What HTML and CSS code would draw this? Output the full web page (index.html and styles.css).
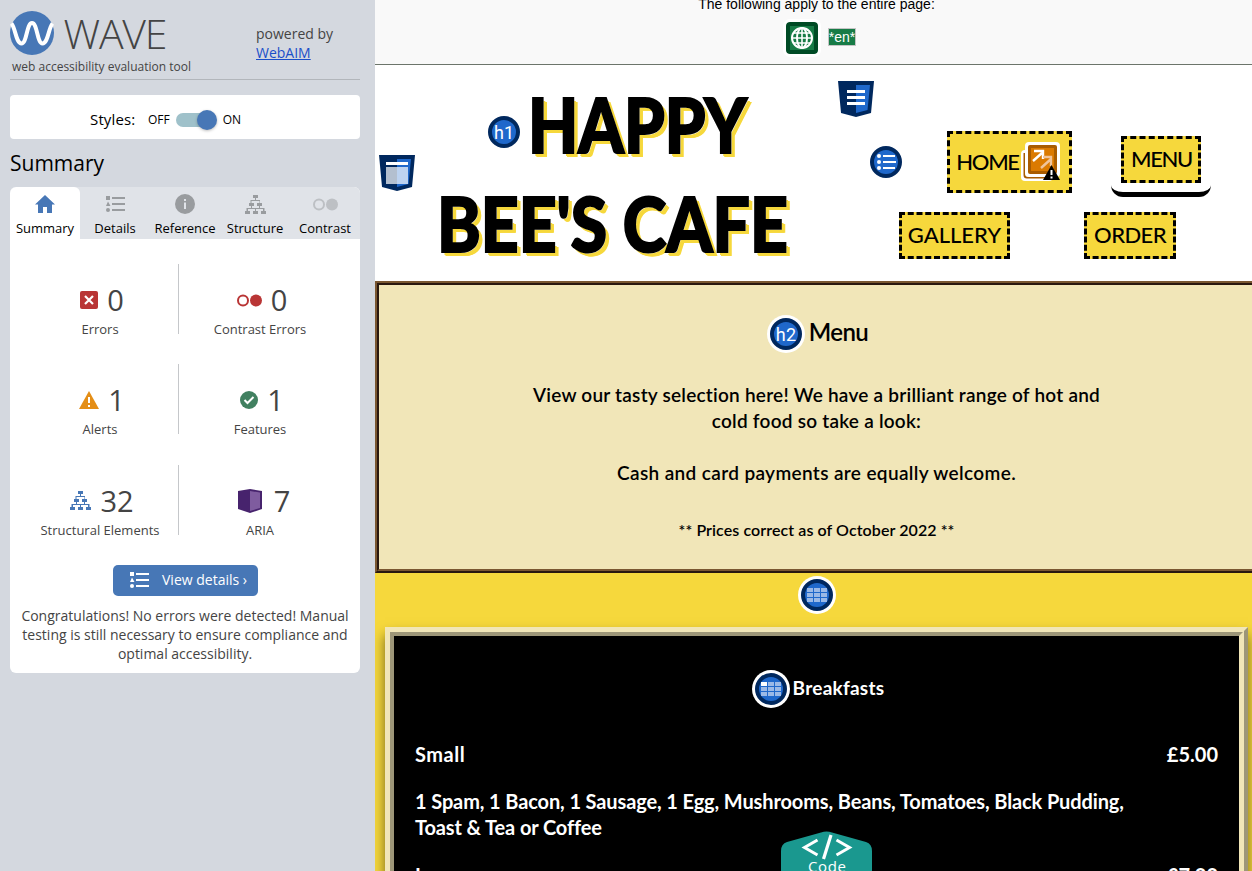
FILE: index.html
```html
<!DOCTYPE html>
<html lang="en">
<head>
<meta charset="utf-8">
<title>WAVE Report of Happy Bee's Cafe</title>
<link rel="stylesheet" href="styles.css">
</head>
<body>
<svg class="defs" width="0" height="0">
  <symbol id="tree" viewBox="0 0 21 19"><path d="M8 0h5v3h-2v2h4v3h2v3h-2v2h4.500v3H21v3h-5v-3h2v-2h-7v2h2v3H8v-3h2v-2H3v2h2v3H0v-3h1.500v-3H6v-2H4V8h1.500V5H10V3H8zM6.500 6v2H9v3H7v2h7v-2h-2V8h2.500V6z"/></symbol>
  <symbol id="list" viewBox="0 0 19 17"><path d="M0 0h4v4H0zM6 1h13v2H6zM2 5.500L4.500 10H0zM6 7h13v2H6zM6 13h13v2H6z"/><circle cx="2" cy="14" r="2"/></symbol>
  <symbol id="pair" viewBox="0 0 25 13"><circle cx="6" cy="6.500" r="5" fill="none" stroke="currentColor" stroke-width="2"/><circle cx="19" cy="6.500" r="6" fill="currentColor"/></symbol>
</svg>
<div class="app">
  <aside class="sidebar">
    <header class="brand">
      <div class="logo">
        <div class="logo-row">
          <svg width="44" height="44" viewBox="0 0 44 44"><circle cx="22" cy="22" r="22" fill="#4777b6"/><path d="M1.500 12.500C5.500 17 6 32.500 11.500 32.500 17 32.500 16.500 12 22 12s5 20.500 10.500 20.500C38 32.500 38.500 17 42.500 12.500" fill="none" stroke="#fff" stroke-width="4"/></svg>
          <svg width="106" height="44" viewBox="0 0 106 44"><text class="wordmark" x="-0.500" y="38" textLength="104">WAVE</text></svg>
        </div>
        <div class="tagline">web accessibility evaluation tool</div>
      </div>
      <div class="powered">powered by<br><a href="#">WebAIM</a></div>
    </header>
    <div class="styles-box"><span class="styles-label">Styles:</span><span>OFF</span><span class="switch"><i></i></span><span>ON</span></div>
    <h2 class="side-title">Summary</h2>
    <section class="panel">
      <nav class="tabs">
        <div class="tab active"><svg width="20" height="18" viewBox="0 0 20 18"><path d="M10 0l10 9.500h-3V18h-5v-6H8v6H3V9.500H0z" fill="#4777b6"/></svg>Summary</div>
        <div class="tab"><svg width="19" height="17"><use href="#list"/></svg>Details</div>
        <div class="tab"><svg width="20" height="20" viewBox="0 0 20 20"><circle cx="10" cy="10" r="10"/><path d="M9 5h2v2H9zM9 8.500h2V15H9z" fill="#e0e3e8"/></svg>Reference</div>
        <div class="tab"><svg width="21" height="19"><use href="#tree"/></svg>Structure</div>
        <div class="tab pale"><svg width="25" height="13"><use href="#pair"/></svg>Contrast</div>
      </nav>
      <div class="stats">
        <div class="stat"><div class="num"><svg width="18" height="18" viewBox="0 0 18 18"><rect width="18" height="18" rx="2" fill="#b93535"/><path d="M5 5l8 8M13 5l-8 8" stroke="#fff" stroke-width="2.200"/></svg>0</div>Errors</div>
        <div class="stat"><div class="num red"><svg width="25" height="13"><use href="#pair"/></svg>0</div>Contrast Errors</div>
        <div class="stat"><div class="num"><svg width="20" height="18" viewBox="0 0 20 18"><path d="M10 0l10 18H0z" fill="#e48e16"/><path d="M9 6h2v6H9zM9 14h2v2H9z" fill="#fff"/></svg>1</div>Alerts</div>
        <div class="stat"><div class="num"><svg width="18" height="18" viewBox="0 0 18 18"><circle cx="9" cy="9" r="9" fill="#418060"/><path d="M4.500 9l3 3 6-6" fill="none" stroke="#fff" stroke-width="2"/></svg>1</div>Features</div>
        <div class="stat"><div class="num blue"><svg width="21" height="19"><use href="#tree"/></svg>32</div>Structural Elements</div>
        <div class="stat"><div class="num aria"><svg width="24" height="24" viewBox="0 0 24 24"><path d="M0 2l12-2 12 2v18l-12 4-12-4z" fill="#47236d"/><path d="M12 2l10 1.500v15.500L12 22z" fill="#7f5c9f"/></svg>7</div>ARIA</div>
      </div>
      <button class="details-btn"><svg width="19" height="17"><use href="#list"/></svg>View details ›</button>
      <p class="congrats">Congratulations! No errors were detected! Manual testing is still necessary to ensure compliance and optimal accessibility.</p>
    </section>
  </aside>

  <main class="view">
    <div class="page">
      <div class="applies">
        <div class="applies-text">The following apply to the entire page:</div>
        <div class="applies-row">
          <svg class="halo-sq" width="32" height="32" viewBox="0 0 32 32"><rect width="32" height="32" rx="3" fill="#004b25"/><rect x="4" y="4" width="24" height="24" fill="#177b46"/><g fill="none" stroke="#fff" stroke-width="2"><circle cx="16" cy="16" r="10"/><ellipse cx="16" cy="16" rx="5" ry="10"/><path d="M16 6v20M6 16h20M7.500 11h17M7.500 21h17" stroke-width="1.600"/></g></svg>
          <span class="lang">*en*</span>
        </div>
      </div>
      <header class="cafe-head">
        <svg class="mark-head" width="36" height="36" viewBox="0 0 36 36"><path d="M0 0h36l-3 32-15 4-15-4z" fill="#00285e"/><path d="M18 4h14l-2.500 25L18 32z" fill="#1f68cb"/><path d="M7 7h22v3H7z" fill="#fff"/><path d="M7 12h22v17H7z" fill="#fff" opacity=".7"/></svg>
        <h1 class="cafe-title">
          <span class="title-line"><svg width="32" height="32" viewBox="0 0 32 32"><circle cx="16" cy="16" r="14" fill="#1f68cb" stroke="#00285e" stroke-width="4"/><text class="htag" x="16" y="22.700">h1</text></svg><span class="w happy">HAPPY</span></span>
          <span class="title-line second"><span class="w bees">BEE'S CAFE</span></span>
        </h1>
        <nav class="cafe-nav">
          <svg class="mark-nav" width="36" height="36" viewBox="0 0 36 36"><path d="M0 0h36l-3 32-15 4-15-4z" fill="#00285e"/><path d="M18 4h14l-2.500 25L18 32z" fill="#1f68cb"/><path d="M9 9h18v3H9zM9 15h18v3H9zM9 21h18v3H9z" fill="#fff"/></svg>
          <div class="nav-row one">
            <svg width="32" height="32" viewBox="0 0 32 32"><circle cx="16" cy="16" r="14" fill="#1f68cb" stroke="#00285e" stroke-width="4"/><g fill="#fff"><circle cx="9" cy="10" r="2"/><circle cx="9" cy="16" r="2"/><circle cx="9" cy="22" r="2"/><path d="M13 9h12v2H13zM13 15h13v2H13zM13 21h12v2H13z"/></g></svg>
            <a class="btn home"><span class="w tight">HOME</span><svg width="40" height="40" viewBox="0 0 40 40"><rect x="0" y="8" width="32" height="31" rx="4" fill="#fff"/><path d="M3.500 11v22q0 2.500 2.500 2.500h24" fill="none" stroke="#a95c00" stroke-width="2"/><rect x="4" y="0" width="35" height="35" rx="4" fill="#fff"/><rect x="7" y="3" width="29" height="29" rx="2" fill="#a95c00"/><rect x="10" y="6" width="23" height="23" fill="#db7a00"/><path d="M12 19l9-8M13 9h9v8" fill="none" stroke="#fff" stroke-width="2.400"/><path d="M20 26l10-9M22 15h8v9" fill="none" stroke="#f0c49a" stroke-width="2.400"/><path d="M30.500 23L39 38H22z" fill="#000"/><path d="M29.500 28h2v5h-2zM29.500 34.500h2v2h-2z" fill="#fff"/></svg></a>
            <div class="current"><a class="btn"><span class="w tight">MENU</span></a></div>
          </div>
          <div class="nav-row two"><a class="btn gallery"><span class="w">GALLERY</span></a><a class="btn order"><span class="w snug">ORDER</span></a></div>
        </nav>
      </header>
      <section class="intro"><div class="intro-in">
        <h2 class="intro-title"><svg width="38" height="38" viewBox="0 0 38 38"><circle cx="19" cy="19" r="19" fill="#fff"/><circle cx="19" cy="19" r="14" fill="#1f68cb" stroke="#00285e" stroke-width="4"/><text class="htag" x="19" y="25.700">h2</text></svg><span class="w snug">Menu</span></h2>
        <p>View our tasty selection here! We have a brilliant range of hot and<br>cold food so take a look:</p>
        <p class="wide">Cash and card payments are equally welcome.</p>
        <p class="small">** Prices correct as of October 2022 **</p>
      </div></section>
      <section class="menu">
        <svg class="table-mark" width="38" height="38" viewBox="0 0 38 38"><circle cx="19" cy="19" r="19" fill="#fff"/><circle cx="19" cy="19" r="14" fill="#1f68cb" stroke="#00285e" stroke-width="4"/><path d="M9 12h6v4H9zM16 12h6v4h-6zM23 12h6v4h-6zM9 17h6v4H9zM16 17h6v4h-6zM23 17h6v4h-6zM9 22h6v4H9zM16 22h6v4h-6zM23 22h6v4h-6z" fill="#9bb9e6"/></svg>
        <div class="board">
          <h3 class="board-title"><svg width="38" height="38" viewBox="0 0 38 38"><circle cx="19" cy="19" r="19" fill="#fff"/><circle cx="19" cy="19" r="14" fill="#1f68cb" stroke="#00285e" stroke-width="4"/><path d="M9 12h6v4H9z" fill="#fff"/><path d="M16 12h6v4h-6zM23 12h6v4h-6zM9 17h6v4H9zM16 17h6v4h-6zM23 17h6v4h-6zM9 22h6v4H9zM16 22h6v4h-6zM23 22h6v4h-6z" fill="#9bb9e6"/></svg><span>Breakfasts</span></h3>
          <div class="item"><span class="size">Small</span><span>£5.00</span></div>
          <div class="desc">1 Spam, 1 Bacon, 1 Sausage, 1 Egg, Mushrooms, Beans, Tomatoes, Black Pudding,<br>Toast &amp; Tea or Coffee</div>
          <div class="item"><span class="size">Large</span><span>£7.00</span></div>
        </div>
      </section>
    </div>
    <div class="code-tab"><svg width="91" height="60" viewBox="0 0 91 60"><path d="M0 20q0-7 6-9L40 1.500q5.500-2 11 0L85 11q6 2 6 9v40H0z" fill="#1a988f"/><path d="M36.500 9L23.500 16.500 36.500 24M55.500 9l13 7.500-13 7.500" fill="none" stroke="#fff" stroke-width="3"/><path d="M50 4L42.500 28" stroke="#fff" stroke-width="3.200"/><text class="code-text" x="27" y="41" textLength="38">Code</text></svg></div>
  </main>
</div>
</body>
</html>
```
FILE: styles.css
```css
* { box-sizing: border-box; }
body { margin: 0; font-family: "Open Sans", sans-serif; color: #000; overflow: hidden; }
.defs { position: absolute; }
svg { display: block; flex: none; }
h1, h2, h3, p { margin: 0; font-weight: inherit; }
.app { display: flex; width: 1252px; height: 871px; overflow: hidden; }

.sidebar { width: 375px; flex: none; padding: 0 15px 0 10px; background: #d4d8df; }
.brand { display: flex; height: 80px; border-bottom: 1px solid #b2b6bb; color: #444; }
.logo { width: 246px; padding-top: 11px; }
.logo-row { display: flex; gap: 10px; }
.wordmark { font-size: 41px; font-weight: 300; fill: #444; }
.tagline { margin: 3px 0 0 2px; font-size: 12px; line-height: 17px; white-space: nowrap; }
.powered { padding-top: 24px; font-size: 14px; line-height: 19px; }
.powered a { color: #1a4fc9; }
.styles-box { display: flex; align-items: center; height: 44px; margin-top: 15px; padding: 5px 0 0 80px; border-radius: 4px; background: #fff; font-size: 12px; }
.styles-label { width: 58px; margin-top: -2px; font-size: 15px; letter-spacing: .15px; }
.switch { width: 38px; height: 14px; margin: 0 9px 0 6px; border-radius: 7px; background: #9fc1ca; }
.switch i { display: block; width: 20px; height: 20px; margin: -3px 0 0 21px; border-radius: 50%; background: #4777b6; box-shadow: 0 1px 3px #0004; }
.side-title { margin-top: 9px; height: 39px; font-size: 21px; line-height: 30px; }
.panel { height: 486px; border-radius: 6px; background: #fff; overflow: hidden; color: #444; text-align: center; }
.tabs { display: flex; height: 52px; background: #e0e3e8; color: #000; }
.tab { display: grid; grid-template-rows: 34px 15px; place-items: center; width: 70px; font-size: 13px; line-height: 15px; white-space: nowrap; }
.tab svg { fill: #999c9f; }
.tab.active { border-radius: 6px 6px 0 0; background: #fff; }
.tab.pale svg { color: #bdc0c4; }
.stats { display: grid; grid-template-columns: 169px 1fr; padding-top: 25px; font-size: 13px; line-height: 18px; row-gap: 30.300px; }
.stat { height: 70px; padding: 18px 0 0 12px; }
.stat:nth-child(odd) { border-right: 1px solid #c5c7ca; }
.stat:nth-child(even) { padding: 18px 19px 0 0; }
.num { display: flex; justify-content: center; align-items: center; gap: 9px; height: 38px; margin-top: -1px; margin-bottom: 1px; padding-left: 4px; font-size: 29px; }
.aria { gap: 12px; padding-left: 8px; }
.red svg { color: #b93535; }
.blue svg { fill: #4777b6; }
.details-btn { display: flex; align-items: center; gap: 13px; width: 145px; height: 31px; margin: 30px 0 0 103px; padding: 0 0 1px 17px; border: 0; border-radius: 5px; background: #4777b6; color: #fff; fill: #fff; font: 14px "Open Sans", sans-serif; white-space: nowrap; }
.details-btn svg { margin-top: 1px; }
.congrats { margin-top: 10px; padding: 0 8px; font-size: 14px; line-height: 19px; }

.view { position: relative; width: 877px; overflow: hidden; background: #f6d83c; font-family: Lato, sans-serif; font-weight: 600; }
.page { width: 883px; }
.w { display: inline-block; white-space: nowrap; }
.tight { letter-spacing: -1.300px; margin-right: -1px; }
.snug { letter-spacing: -.6px; }
.applies { height: 65px; border-bottom: 1px solid #6c756b; background: #f9f9f9; text-align: center; font: 14px "Liberation Sans", sans-serif; }
.applies-text { height: 22px; line-height: 9px; }
.applies-row { display: flex; justify-content: center; align-items: center; gap: 10px; padding-left: 9px; }
.halo-sq { border-radius: 4px; box-shadow: 0 0 0 3px #fff; }
.lang { height: 18px; margin-top: -2px; border: 1px solid #c5c5c5; background: #177b46; color: #fff; font-size: 14px; line-height: 17px; }
.cafe-head { display: flex; height: 216px; background: #fff; }
.mark-head { margin: 90px 0 0 4px; }
.cafe-title { width: 423px; padding-top: 10px; font-weight: 900; font-size: 77px; line-height: 98px; }
.title-line { display: flex; align-items: center; height: 98px; padding-left: 73px; gap: 8px; }
.title-line .w { margin-top: -2px; -webkit-text-stroke: 2px #000; text-shadow: 1px 1px #fff, 3px 3px #f6d83c, 4px 4px #f6d83c, 5px 4px #f6d83c; transform: scaleX(.845); transform-origin: left; }
.title-line .bees { margin-top: 0; transform: scaleX(.857); }
.title-line svg { margin-top: 16px; }
.title-line.second { padding-left: 22px; }
.htag { font: 400 18px Roboto, sans-serif; fill: #fff; text-anchor: middle; }
.cafe-nav { flex: 1; font-size: 22px; font-weight: 500; }
.mark-nav { margin-top: 16px; }
.nav-row { display: flex; align-items: center; }
.nav-row.one { height: 62px; margin-top: 14px; padding-left: 32px; }
.nav-row.two { margin-top: 19px; padding-left: 61px; gap: 74px; }
.btn { display: flex; align-items: center; justify-content: center; width: 80px; height: 47px; border: 3px dashed #000; background: #f6d83c; }
.btn .w { margin-top: -2px; }
.home { width: 125px; height: 62px; margin-left: 45px; padding-right: 2px; gap: 3px; }
.gallery { width: 111px; }
.order { width: 92px; }
.current { width: 100px; height: 61px; margin: 8px 0 0 39px; padding-left: 10px; border-bottom: 5px solid #000; border-radius: 0 0 12px 12px; }
.intro { height: 292px; border: 2px solid #7a5731; border-bottom-color: #29180f; }
.intro-in { height: 288px; border: 2px solid #29180f; border-bottom-color: #7a5731; background: #f1e6b8; text-align: center; font-size: 19px; line-height: 26px; letter-spacing: .24px; }
.intro-title { display: flex; justify-content: center; align-items: flex-start; gap: 4px; height: 97px; padding: 30px 0 0 2px; font-size: 24px; line-height: 33px; }
.intro p { margin-bottom: 26px; }
.intro .wide { letter-spacing: .36px; }
.intro .small { margin-top: 31px; font-size: 16px; letter-spacing: .08px; }
.menu { padding: 3px 10px 0; }
.table-mark { margin: 0 auto; }
.board { width: 863px; height: 400px; margin-top: 13px; padding: 34px 21px; border: 9px ridge #f1e6b8; background: #000; color: #fff; box-shadow: 0 8px 12px #0008; font-size: 20px; line-height: 26px; font-weight: 700; }
.board-title { display: flex; justify-content: center; align-items: center; gap: 3px; height: 38px; padding-left: 3px; font-size: 19px; letter-spacing: .25px; }
.board-title span { margin-top: -2px; }
.item { display: flex; justify-content: space-between; margin-top: 33px; }
.size { letter-spacing: .5px; }
.desc { margin-top: 21px; letter-spacing: -.12px; }
.desc + .item { margin-top: 22px; }
.code-tab { position: absolute; left: 406px; top: 831px; }
.code-text { font: 15px "Open Sans", sans-serif; fill: #fff; }
```
